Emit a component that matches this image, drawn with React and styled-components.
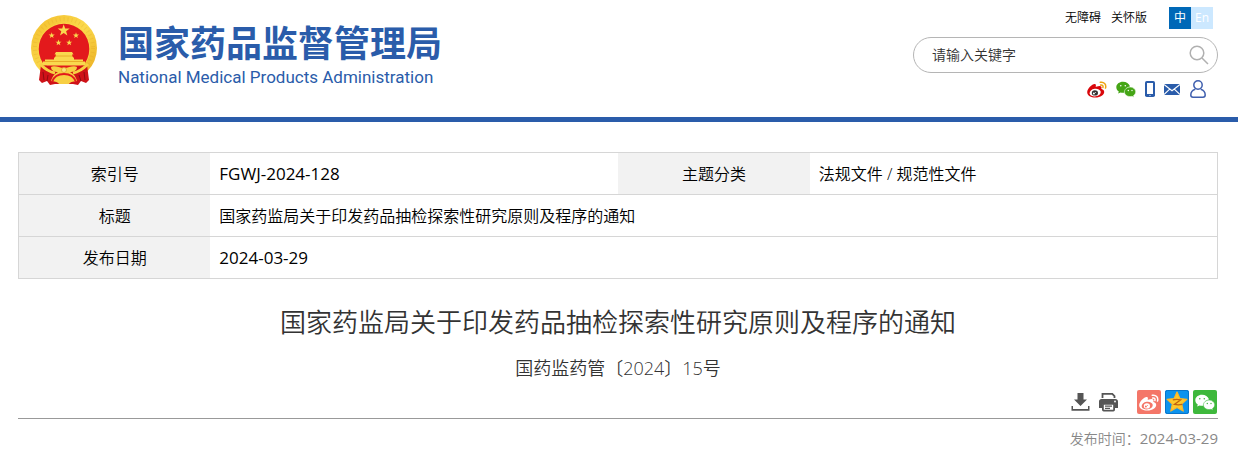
import React from 'react';
import styled, { createGlobalStyle } from 'styled-components';

const GlobalStyle = createGlobalStyle`
  * {
    box-sizing: border-box;
  }

  body {
    margin: 0;
    background: #fff;
    color: #000;
    font-family: 'Open Sans', 'Noto Sans CJK SC', sans-serif;
    font-size: 16px;
    font-weight: 350;
  }

  a {
    color: inherit;
    text-decoration: none;
  }

  svg {
    display: block;
  }
`;

const Header = styled.header`
  display: flex;
  justify-content: space-between;
  padding: 7px 20px 19px 31px;
  border-bottom: 5px solid #2a5caa;
`;

const Brand = styled.a`
  display: flex;
  align-items: flex-start;
  gap: 21px;
  padding-top: 8px;
  color: #2a5caa;
`;

const BrandText = styled.div`
  display: flex;
  flex-direction: column;
`;

const BrandName = styled.span`
  font-family: 'Noto Sans CJK SC', sans-serif;
  font-size: 36px;
  font-weight: 700;
  line-height: 52px;
`;

const BrandSub = styled.span`
  font-family: Roboto, sans-serif;
  font-size: 17px;
  font-weight: 400;
  line-height: 20px;
`;

const Tools = styled.div`
  display: flex;
  flex-direction: column;
  align-items: flex-end;
  width: 305px;
`;

const TopLinks = styled.nav`
  display: flex;
  align-items: center;
  gap: 10px;
  padding-right: 5px;
  font-size: 12px;
  line-height: 20px;
`;

const LangSwitch = styled.div`
  display: flex;
  margin-left: 12px;
`;

const LangButton = styled.button`
  width: 22px;
  height: 22px;
  padding: 0;
  border: none;
  background: ${({ $active }) => ($active ? '#0068b7' : '#cce8ff')};
  color: #fff;
  font: inherit;
  font-weight: 400;
  cursor: pointer;
`;

const SearchForm = styled.form`
  display: flex;
  align-items: center;
  width: 100%;
  height: 36px;
  margin-top: 8px;
  padding: 0 8px 0 18px;
  border: 1px solid #b5b5b5;
  border-radius: 18px;
`;

const SearchInput = styled.input`
  flex: 1;
  min-width: 0;
  padding: 0 0 2px;
  border: none;
  outline: none;
  background: none;
  color: #333;
  font: inherit;
  font-size: 14px;

  &::placeholder {
    color: #333;
    opacity: 1;
  }
`;

const IconButton = styled.button`
  padding: 0;
  border: none;
  background: none;
  cursor: pointer;
`;

const SocialLinks = styled.div`
  display: flex;
  align-items: center;
  gap: 9px;
  margin-top: 7px;
  padding-right: 11px;
`;

const Main = styled.main`
  padding: 30px 20px 20px 18px;
`;

const InfoTable = styled.table`
  width: 100%;
  table-layout: fixed;
  border: 1px solid #d6d6d6;
  border-collapse: collapse;
  line-height: 24px;
`;

const InfoRow = styled.tr`
  height: 42px;
  border-bottom: 1px solid #d6d6d6;
`;

const InfoLabel = styled.th`
  width: 16%;
  padding: 0;
  background: #f2f2f2;
  font-weight: inherit;
`;

const InfoValue = styled.td`
  padding: 0 9px;
  font-size: ${({ $numeric }) => ($numeric ? 17 : 16)}px;
  font-weight: ${({ $numeric }) => ($numeric ? 400 : 'inherit')};
`;

const Title = styled.h1`
  margin: 23px 0 0;
  color: #333;
  font-size: 26px;
  font-weight: inherit;
  line-height: 40px;
  text-align: center;
`;

const DocNumber = styled.p`
  margin: 14px 0 0;
  color: #333;
  font-size: 18px;
  line-height: 24px;
  text-align: center;
`;

const ActionBar = styled.div`
  display: flex;
  align-items: center;
  justify-content: flex-end;
  gap: 9px;
  margin-top: 10px;
  padding: 0 1px 4px 0;
  border-bottom: 1px solid #999;
`;

const ShareList = styled.div`
  display: flex;
  gap: 4px;
  margin-left: 10px;
`;

const ShareLink = styled.a`
  display: flex;
  align-items: center;
  justify-content: center;
  width: 24px;
  height: 24px;
  border-radius: 2px;
  background: ${({ $color }) => $color};
`;

const PublishTime = styled.p`
  margin: 7px 0 0;
  color: #888;
  font-size: 14px;
  line-height: 24px;
  text-align: right;
`;

const PublishDate = styled.time`
  font-size: 15px;
  font-weight: 400;
`;

const starPoints = (cx, cy, r) =>
	Array.from({ length: 10 }, (_, i) => {
		const radius = i % 2 ? r * 0.4 : r;
		const angle = (Math.PI / 5) * i - Math.PI / 2;
		return `${(cx + radius * Math.cos(angle)).toFixed(2)},${(cy + radius * Math.sin(angle)).toFixed(2)}`;
	}).join(' ');

const Emblem = () => (
	<svg width="66" height="71" viewBox="0 0 66 71" aria-hidden="true">
		<defs>
			<linearGradient id="gold" x1="0" y1="0" x2="1" y2="1">
				<stop offset="0" stopColor="#f2bd2c" />
				<stop offset="0.5" stopColor="#fbd94c" />
				<stop offset="1" stopColor="#e9a81c" />
			</linearGradient>
		</defs>
		<ellipse cx="33" cy="33" rx="33" ry="33" fill="url(#gold)" />
		<circle cx="33" cy="33" r="29" fill="none" stroke="#d9981a" strokeWidth="4" strokeDasharray="1 3" opacity="0.2" />
		<circle cx="33" cy="34" r="26" fill="#fbd648" />
		<circle cx="33" cy="34" r="25.3" fill="#e3191c" />
		<g fill="#f9d94e">
			<polygon points={starPoints(32.7, 15.5, 6.3)} />
			<polygon points={starPoints(20.7, 20.5, 3.2)} />
			<polygon points={starPoints(45, 20.5, 3.2)} />
			<polygon points={starPoints(27.5, 27.7, 3.2)} />
			<polygon points={starPoints(38.2, 27.7, 3.2)} />
			<path d="M25 37h16l1.500 2.500h-1.500v1.500l2 2v1.500h9v2h2v4H12v-4h2v-2h9V43l2-2v-1.500h-1.500z" />
		</g>
		<path d="M24 41h18M14 46.500h38" stroke="#e4a31f" strokeWidth="0.800" />
		<path d="M10 50c7 1 14 2 23 4 9-2 16-3 23-4l2 15-3 3-5-2-3 4-5-1H24l-5 1-3-4-5 2-3-3z" fill="#cf1218" />
		<path d="M9 49c5 5 9 8 15 9M57 49c-5 5-9 8-15 9" stroke="#f7cf43" strokeWidth="3" fill="none" />
		<path d="M12 57l1 8M17 60l-1 6M53 57l1 8M48 60l2 6" stroke="#8f0c12" strokeWidth="1" />
		<path d="M20 52c4-2 8 1 13 1s9-3 13-1c0 4-4 5-7 5 4 2 6 5 7 9-3 1-6 0-8 3H28c-2-3-5-2-8-3 1-4 3-7 7-9-3 0-7-1-7-5z" fill="#f7cf43" />
		<path d="M21 67c2-6 7-8 12-8s10 2 12 8" stroke="#e3191c" strokeWidth="1.800" fill="none" />
		<circle cx="33" cy="55" r="2.500" fill="#fbe07a" stroke="#e0a42a" strokeWidth="0.800" />
	</svg>
);

const WeiboIcon = ({ width, height, body, wave, eye, pupil }) => (
	<svg width={width} height={height} viewBox="0 0 20 17" aria-hidden="true">
		<path d="M7.800 3C5.500 2.600.200 7.600.200 11.200c0 3.400 4 5.400 8.100 5.400 5.300 0 8.900-3 8.900-5.600 0-1.600-1.300-2.500-2.500-2.900-.300-.100-.500-.200-.300-.700.900-2.500-1.300-3.200-5.300-1.600-.300.100-.500 0-.400-.300C9.100 4.300 9 3.200 7.800 3z" fill={body} />
		<ellipse cx="8.200" cy="11.600" rx="5.600" ry="3.800" fill={eye} transform="rotate(-8 8.200 11.600)" />
		<ellipse cx="7.900" cy="11.900" rx="3.100" ry="2.700" fill={pupil} />
		<circle cx="6.900" cy="12.600" r="1" fill={eye} />
		<circle cx="8.600" cy="11.400" r="0.500" fill={eye} />
		<path d="M13.300 1.300c3.500-.800 6.300 2.200 5.200 5.800M13.700 4c1.700-.300 2.700.900 2.200 2.500" fill="none" stroke={wave} strokeWidth="1.500" strokeLinecap="round" />
	</svg>
);

const WechatIcon = ({ color, eye }) => (
	<svg width="20" height="17" viewBox="0 0 20 17" aria-hidden="true">
		<path d="M7 .800C3.200.800.300 3.200.300 6.300c0 1.800 1 3.300 2.500 4.300l-.700 2 2.500-1.200c.8.200 1.600.400 2.700.400h1.500c-.300-3.300 2-5.900 5.300-6.400C13 2.700 10.300.800 7 .800z" fill={color} />
		<path d="M19.700 10.800c0-2.600-2.600-4.700-5.600-4.700-3.200 0-5.700 2.100-5.700 4.700 0 2.700 2.500 4.800 5.700 4.800.700 0 1.300-.100 2-.300l1.900 1-.500-1.700c1.400-.900 2.200-2.300 2.200-3.800z" fill={color} stroke={eye} strokeWidth="0.500" />
		<circle cx="4.800" cy="4.700" r="0.800" fill={eye} />
		<circle cx="9.300" cy="4.700" r="0.800" fill={eye} />
		<circle cx="12.300" cy="9.500" r="0.700" fill={eye} />
		<circle cx="16" cy="9.500" r="0.700" fill={eye} />
	</svg>
);

const PhoneIcon = () => (
	<svg width="10" height="16" viewBox="0 0 10 16" aria-hidden="true">
		<rect width="10" height="16" rx="1.800" fill="#2a5caa" />
		<rect x="2" y="2" width="6" height="11" fill="#fff" />
		<circle cx="5" cy="14.500" r="0.600" fill="#fff" />
	</svg>
);

const MailIcon = () => (
	<svg width="16" height="11" viewBox="0 0 16 11" aria-hidden="true">
		<rect width="16" height="11" fill="#2a5caa" />
		<path d="M0 .500l8 6.200L16 .500M0 10.500l5.700-5.300M16 10.500l-5.700-5.300" fill="none" stroke="#fff" strokeWidth="1.100" />
	</svg>
);

const UserIcon = () => (
	<svg width="18" height="18" viewBox="-1 0 18 18" fill="none" stroke="#3f5fae" strokeWidth="1.500" aria-hidden="true">
		<circle cx="8" cy="5" r="4.200" />
		<path d="M5.300 9.200C2.600 10 .800 12.200.800 15c0 1.500.700 2.200 2.200 2.200h10c1.500 0 2.200-.700 2.200-2.200 0-2.800-1.800-5-4.500-5.800" />
	</svg>
);

const SearchIcon = () => (
	<svg width="20" height="20" viewBox="0 0 20 20" fill="none" stroke="#b0b0b0" strokeWidth="1.500" aria-hidden="true">
		<circle cx="8" cy="8" r="6.800" />
		<path d="M13 13l6 6" />
	</svg>
);

const DownloadIcon = () => (
	<svg width="19" height="20" viewBox="0 0 19 20" fill="#555" aria-hidden="true">
		<path d="M6.500 1h6v6.500H16L9.500 14 3 7.500h3.500z" />
		<path d="M.500 14H2v3h15v-3h1.500v4.700H.500z" />
	</svg>
);

const PrintIcon = () => (
	<svg width="19" height="20" viewBox="0 0 19 20" aria-hidden="true">
		<path d="M3.500 6V1.800h9.800L15.500 4v2" fill="#fff" stroke="#555" strokeWidth="1.800" />
		<path d="M2.500 7h14c1.500 0 2.500 1 2.500 2.500V16h-3v-3.500H3V16H0V9.500C0 8 1 7 2.500 7z" fill="#555" />
		<rect x="3.900" y="11.900" width="11.200" height="6.700" rx="0.800" fill="#fff" stroke="#555" strokeWidth="1.800" />
		<path d="M6 14.200h7M6 16.400h5" stroke="#555" strokeWidth="1.300" />
		<circle cx="16" cy="9.500" r="0.900" fill="#fff" />
	</svg>
);

const QzoneIcon = () => (
	<svg width="24" height="24" viewBox="0 0 24 24" aria-hidden="true">
		<rect x="0.500" y="0.500" width="23" height="23" rx="2" fill="#0c93ee" stroke="#0874c8" />
		<path d="M12 2l2.900 6.500 7 .8-5.200 4.800 1.500 7L12 17.500l-6.200 3.600 1.500-7L2.100 9.300l7-.800z" fill="#fdc92c" stroke="#fbb62a" strokeWidth="1.200" strokeLinejoin="round" />
		<path d="M7.800 9.800c2.500-.600 5.300-.600 8 0l-6.500 4.600c2.500.5 5.500.5 8 0" fill="none" stroke="#c4620c" strokeWidth="1.200" />
	</svg>
);

const App = () => {
	return (
		<>
			<GlobalStyle />
			<Header>
				<Brand href="#">
					<Emblem />
					<BrandText>
						<BrandName>国家药品监督管理局</BrandName>
						<BrandSub>National Medical Products Administration</BrandSub>
					</BrandText>
				</Brand>
				<Tools>
					<TopLinks>
						<a href="#">无障碍</a>
						<a href="#">关怀版</a>
						<LangSwitch>
							<LangButton type="button" $active>中</LangButton>
							<LangButton type="button">En</LangButton>
						</LangSwitch>
					</TopLinks>
					<SearchForm role="search">
						<SearchInput type="text" placeholder="请输入关键字" aria-label="请输入关键字" />
						<IconButton type="submit" aria-label="搜索"><SearchIcon /></IconButton>
					</SearchForm>
					<SocialLinks>
						<a href="#" aria-label="微博">
							<WeiboIcon width={20} height={17} body="#d9070b" wave="#eda412" eye="#fff" pupil="#333" />
						</a>
						<a href="#" aria-label="微信"><WechatIcon color="#45a516" eye="#fff" /></a>
						<a href="#" aria-label="手机"><PhoneIcon /></a>
						<a href="#" aria-label="邮箱"><MailIcon /></a>
						<a href="#" aria-label="个人中心"><UserIcon /></a>
					</SocialLinks>
				</Tools>
			</Header>
			<Main>
				<InfoTable>
					<tbody>
						<InfoRow>
							<InfoLabel scope="row">索引号</InfoLabel>
							<InfoValue $numeric>FGWJ-2024-128</InfoValue>
							<InfoLabel scope="row">主题分类</InfoLabel>
							<InfoValue>法规文件 / 规范性文件</InfoValue>
						</InfoRow>
						<InfoRow>
							<InfoLabel scope="row">标题</InfoLabel>
							<InfoValue colSpan={3}>国家药监局关于印发药品抽检探索性研究原则及程序的通知</InfoValue>
						</InfoRow>
						<InfoRow>
							<InfoLabel scope="row">发布日期</InfoLabel>
							<InfoValue colSpan={3} $numeric>2024-03-29</InfoValue>
						</InfoRow>
					</tbody>
				</InfoTable>
				<Title>国家药监局关于印发药品抽检探索性研究原则及程序的通知</Title>
				<DocNumber>国药监药管〔2024〕15号</DocNumber>
				<ActionBar>
					<IconButton type="button" aria-label="下载"><DownloadIcon /></IconButton>
					<IconButton type="button" aria-label="打印"><PrintIcon /></IconButton>
					<ShareList>
						<ShareLink href="#" $color="#f47668" aria-label="分享到微博">
							<WeiboIcon width={20} height={17} body="#fff" wave="#fff" eye="#f47668" pupil="#fff" />
						</ShareLink>
						<ShareLink href="#" $color="#0c93ee" aria-label="分享到QQ空间"><QzoneIcon /></ShareLink>
						<ShareLink href="#" $color="#3eb83c" aria-label="分享到微信"><WechatIcon color="#fff" eye="#3eb83c" /></ShareLink>
					</ShareList>
				</ActionBar>
				<PublishTime>
					发布时间：<PublishDate dateTime="2024-03-29">2024-03-29</PublishDate>
				</PublishTime>
			</Main>
		</>
	);
};

export default App;
